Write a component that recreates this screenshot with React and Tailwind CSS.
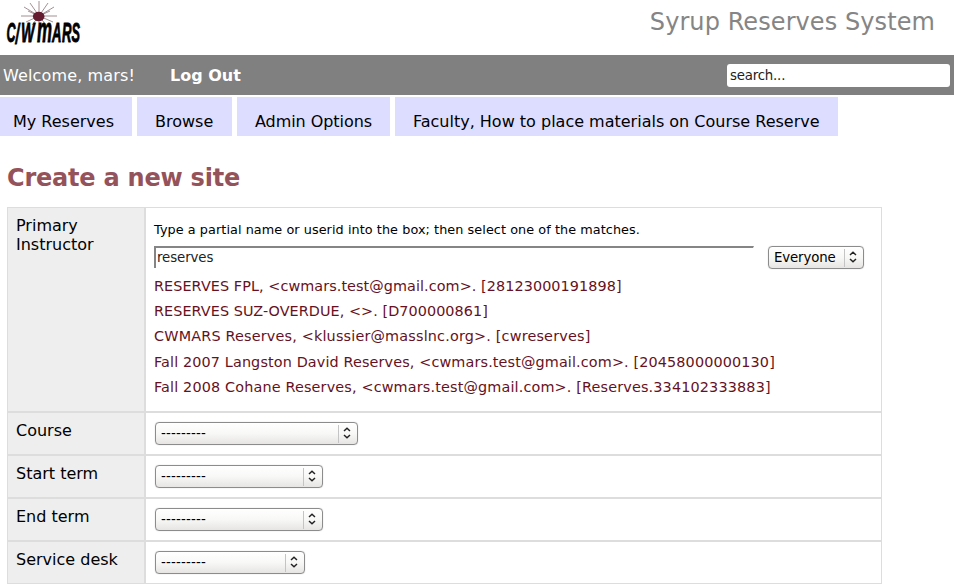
const tabs = [
  { label: 'My Reserves', box: 'w-[132px] pl-[13px]' },
  { label: 'Browse', box: 'w-[95px] pl-[18px]' },
  { label: 'Admin Options', box: 'w-[153px] pl-[18px] tracking-[-0.06px]' },
  { label: 'Faculty, How to place materials on Course Reserve', box: 'w-[443px] pl-[18px]' },
];

const matches = [
  { text: 'RESERVES FPL, <cwmars.test@gmail.com>. [28123000191898]', spacing: 'tracking-[0.07px]' },
  { text: 'RESERVES SUZ-OVERDUE, <>. [D700000861]', spacing: 'tracking-[0.06px]' },
  { text: 'CWMARS Reserves, <klussier@masslnc.org>. [cwreserves]', spacing: 'tracking-[0.175px]' },
  { text: 'Fall 2007 Langston David Reserves, <cwmars.test@gmail.com>. [20458000000130]', spacing: 'pt-px tracking-[0.125px]' },
  { text: 'Fall 2008 Cohane Reserves, <cwmars.test@gmail.com>. [Reserves.334102333883]', spacing: 'tracking-[0.15px]' },
];

const fields = [
  { label: 'Course', width: 'w-[203px]' },
  { label: 'Start term', width: 'w-[168px]' },
  { label: 'End term', width: 'w-[168px]' },
  { label: 'Service desk', width: 'w-[150px]' },
];

function Logo() {
  return (
    <svg width="90" height="50" viewBox="0 0 90 50" className="block">
      <g stroke="#8d7479" strokeWidth="0.8">
        <path d="M39 16L39 1M39 16L57 16M39 16L21 16M39 16L30 3M39 16L48 3M39 16L24 7M39 16L54 7M39 16L26 22M39 16L53 22M39 16L28 11M39 16L50 11M39 16L39 33M39 16L32 25M39 16L46 25" />
      </g>
      <ellipse cx="38.7" cy="16.5" rx="5.8" ry="4.8" fill="#651c30" />
      <text
        transform="translate(6.5 42) scale(0.5 1)"
        fontFamily="'Liberation Sans', sans-serif"
        fontSize="27"
        fontWeight="bold"
        fontStyle="italic"
        stroke="#000"
        strokeWidth="0.9"
      >
        <tspan x="0" textLength="18" lengthAdjust="spacingAndGlyphs">C</tspan>
        <tspan x="18" dy="1">/</tspan>
        <tspan x="29" dy="-1" textLength="27" lengthAdjust="spacingAndGlyphs">W</tspan>
        <tspan x="61" fontSize="35" textLength="30" lengthAdjust="spacingAndGlyphs">m</tspan>
        <tspan x="91" textLength="19" lengthAdjust="spacingAndGlyphs">A</tspan>
        <tspan x="111" textLength="19" lengthAdjust="spacingAndGlyphs">R</tspan>
        <tspan x="130" textLength="17" lengthAdjust="spacingAndGlyphs">S</tspan>
      </text>
    </svg>
  );
}

function Select({ label, width, dashes }) {
  return (
    <div
      className={`flex h-[23px] items-center rounded-[4px] border border-[#8c8c8c] bg-linear-to-b from-white via-[#f8f8f7] to-[#e6e5e3] pl-[5px] text-[13.33px] shadow-[0_0_1px_#bbb] ${width}`}
    >
      <span className={`flex-1 whitespace-nowrap ${dashes ? 'tracking-[0.2px]' : 'tracking-[-0.15px]'}`}>{label}</span>
      <span className="flex h-[18px] w-[19px] items-center border-l border-[#c4c4c4] pb-px pl-[4px]">
        <svg width="9" height="12" viewBox="0 0 9 12" fill="none" stroke="#222" strokeWidth="1.5">
          <path d="M1 4L4 1.3L7 4M1 8L4 10.7L7 8" />
        </svg>
      </span>
    </div>
  );
}

export default function App() {
  return (
    <div className="h-[588px] w-[954px] overflow-hidden bg-white font-['DejaVu_Sans',sans-serif] text-base leading-[19px] text-black">
      <header className="flex h-[55px] justify-between pr-[19px]">
        <Logo />
        <h1 className="mt-2 text-[24px] leading-7 tracking-[0.08px] whitespace-nowrap text-[#858585]">Syrup Reserves System</h1>
      </header>

      <div className="flex h-10 items-center bg-[#808080] pr-1 pl-[3px] text-white">
        <span className="w-[167px] tracking-[0.14px]">Welcome, mars!</span>
        <b className="flex-1">Log Out</b>
        <div className="mt-px flex h-[23px] w-[223px] items-center rounded-[3px] bg-white pb-px pl-[3px] text-[13.33px] tracking-[-0.2px] text-[#222]">
          search...
        </div>
      </div>

      <nav className="mt-0.5 flex gap-[5px]">
        {tabs.map((t) => (
          <a key={t.label} className={`h-[39px] bg-[#ddddff] pt-[15px] whitespace-nowrap ${t.box}`}>
            {t.label}
          </a>
        ))}
      </nav>

      <main className="pl-[7px]">
        <h2 className="mt-7 mb-[15px] h-7 text-[24px] leading-7 font-bold tracking-[-0.22px] text-[#94525a]">
          Create a new site
        </h2>

        <div className="grid w-[875px] grid-cols-[138px_737px]">
          <div className="h-[205px] border border-[#dddddd] bg-[#eeeeee] pt-2 pl-2">
            Primary
            <br />
            Instructor
          </div>
          <div className="border border-[#dddddd] pt-[14px] pl-2">
            <p className="text-[12.8px] leading-4 tracking-[0.07px]">
              Type a partial name or userid into the box; then select one of the matches.
            </p>
            <div className="mt-2 flex gap-[14px]">
              <div className="flex h-[22px] w-[600px] items-center border-t-2 border-r border-l-2 border-[#858585] border-r-transparent pb-px pl-px text-[13.33px] tracking-[-0.1px] text-[#222]">
                reserves
              </div>
              <Select label="Everyone" width="w-[96px]" />
            </div>
            <ul className="mt-[5px] text-[14.4px] leading-[25px] text-[#661122]">
              {matches.map((m) => (
                <li key={m.text} className={`whitespace-nowrap ${m.spacing}`}>{m.text}</li>
              ))}
            </ul>
          </div>
          {fields.map((f) => (
            <div key={f.label} className="contents">
              <div className="h-[43px] border border-[#dddddd] bg-[#eeeeee] pt-2 pl-2">{f.label}</div>
              <div className="border border-[#dddddd] pt-[9px] pl-[9px]">
                <Select label="---------" width={f.width} dashes />
              </div>
            </div>
          ))}
        </div>
      </main>
    </div>
  );
}
